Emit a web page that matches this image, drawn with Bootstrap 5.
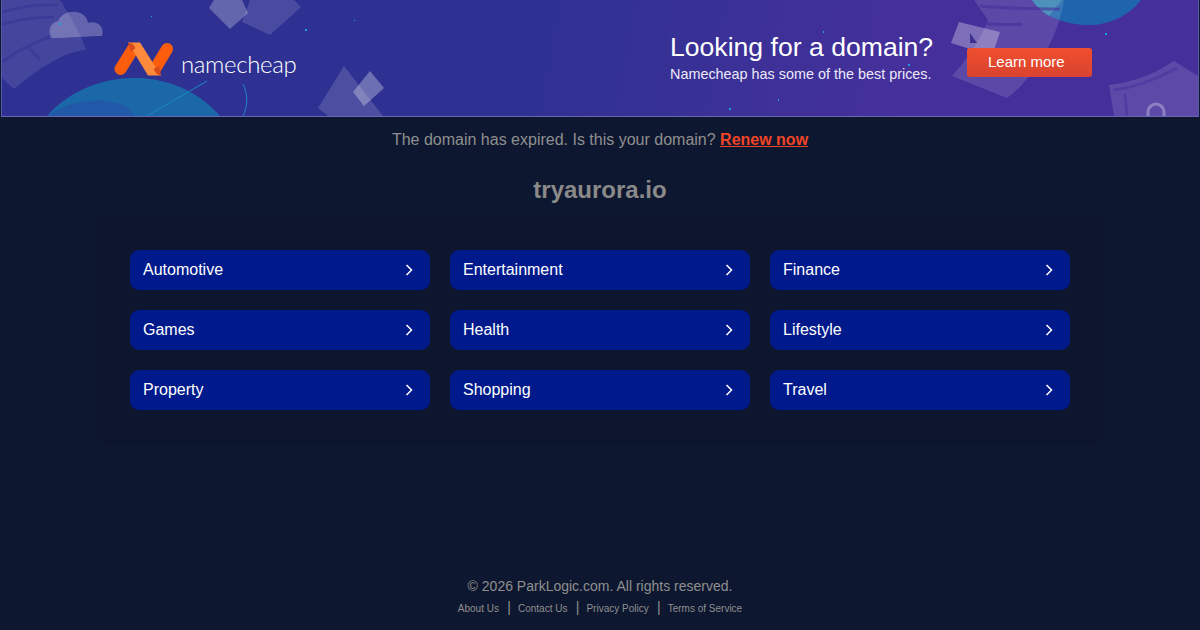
<!DOCTYPE html>
<html lang="en">
<head>
  <meta charset="UTF-8">
  <meta name="viewport" content="width=device-width, initial-scale=1.0">
  <title>tryaurora.io</title>
  <link rel="stylesheet" href="https://cdn.jsdelivr.net/npm/bootstrap@5.3.0/dist/css/bootstrap.min.css">
  <style>
    html, body { height: 100%; }
    body { background: #0e1730; font-family: "Liberation Sans", Arial, sans-serif; color: #8f8f8f; overflow: hidden; }
    .page-wrap { height: 630px; }
    .promo {
      position: relative; height: 117px; margin: 0 1px; overflow: hidden;
      background: linear-gradient(100deg, #2f3192 0%, #2f3192 45%, #45309b 75%, #45309b 100%);
      border-bottom: 1px solid #6a64b4; border-left: 1px solid #5a5aa8; border-right: 1px solid #5a5aa8;
    }
    .promo-art { position: absolute; left: 0; top: 0; width: 100%; height: 100%; }
    .promo-inner { position: relative; height: 100%; padding-left: 112px; }
    .nc-logo { width: 60px; height: 34px; margin-top: 1px; }
    .nc-word { font-family: Lato, sans-serif; font-weight: 300; font-size: 24px; color: #fff; line-height: 1; margin-left: 7px; margin-top: 11px; letter-spacing: -0.35px; }
    .promo-copy { position: absolute; left: 668px; top: 31px; color: #fff; }
    .promo-title { font-size: 26.6px; line-height: 32px; }
    .promo-sub { font-size: 14.4px; line-height: 20px; margin-top: 1px; color: #eceaf6; }
    .promo-btn {
      position: absolute; left: 965px; top: 48px; width: 125px; height: 29px; padding: 0 0 0 21px;
      background: linear-gradient(180deg, #f04f2e, #d9432f); color: #fff; border-radius: 3px;
      font-size: 15px; line-height: 28px; text-decoration: none;
    }
    .expired-note { font-size: 16px; line-height: 20px; margin-top: 13px; color: #8f8f8f; }
    .expired-note a { color: #ee4526; font-weight: 700; }
    .domain-name { font-size: 24px; font-weight: 700; line-height: 30px; margin: 25px 0 0; color: #8a8a8a; }
    .cat-panel { width: 1000px; margin: 15px auto 0; padding: 30px; border-radius: 10px; box-shadow: 0 0 5px rgba(9, 15, 34, .5); background: #0e162f; }
    .cat-grid { display: grid; grid-template-columns: repeat(3, 300px); gap: 20px; }
    .cat-link {
      height: 40px; padding: 0 15px 0 13px; background: #001a8c; color: #fff; border-radius: 9px;
      font-size: 16px; text-decoration: none;
    }
    .cat-link svg { width: 12px; height: 14px; }
    .site-foot { position: absolute; left: 0; right: 0; top: 576px; }
    .foot-copy { font-size: 14px; line-height: 20px; color: #8f8f8f; }
    .foot-links { font-size: 10px; line-height: 16px; margin-top: 3px; color: #8f8f8f; }
    .foot-links a { color: #8f8f8f; text-decoration: none; }
    .foot-sep { font-size: 14px; padding: 0 7.2px 0 8.2px; }
  </style>
</head>
<body>
<div class="page-wrap">
  <div class="promo">
    <svg class="promo-art" viewBox="0 0 1196 116" preserveAspectRatio="none" aria-hidden="true">
      <!-- globes -->
      <path d="M45 116C70 88 105 77 135 78C172 79 200 95 218 116Z" fill="#1b68a8"/>
      <path d="M45 116C62 104 85 99 105 101C122 103 130 109 132 116Z" fill="#2258a8"/>
      <path d="M145 116L205 81" stroke="#1e86c4" stroke-width="1" fill="none"/>
      <path d="M241 84C246 94 246 106 241 116" stroke="#1e86c4" stroke-width="1" fill="none"/>
      <path d="M1030 0C1040 16 1065 26 1090 25C1112 24 1130 12 1139 0Z" fill="#1f65ad"/>
      <path d="M1030 0C1034 6 1040 12 1047 16L1060 0Z" fill="#3f8fb5" opacity=".7"/>
      <!-- left scroll + cloud -->
      <path d="M0 0H58C68 16 78 32 84 50C60 52 35 70 12 89L0 78Z" fill="#fff" opacity=".1"/>
      <path d="M0 12C20 6 40 4 56 5M0 24C20 19 38 17 52 17M0 62C16 50 34 42 50 36M26 47L38 60" stroke="#2f3192" stroke-width="3" opacity=".45" fill="none"/>
      <path d="M49 38C46 30 48 23 56 21C62 8 84 9 86 23C96 20 103 28 100 36C88 36 66 38 49 38Z" fill="#fff" opacity=".25"/>
      <!-- left-top cards -->
      <path d="M240 22L268 35L299 7L292 0H248Z" fill="#fff" opacity=".13"/>
      <path d="M207 8L212 0H240L246 13L228 29Z" fill="#fff" opacity=".25" stroke="#fff" stroke-opacity=".1"/>
      <!-- lower-left pages -->
      <path d="M316 108L342 66L381 116H326Z" fill="#fff" opacity=".14"/>
      <path d="M351 92L368 71L382 88L362 106Z" fill="#fff" opacity=".3"/>
      <!-- right doc -->
      <path d="M972 0H1062C1056 40 1030 80 1005 98L950 76C965 60 978 40 986 20Z" fill="#fff" opacity=".12"/>
      <path d="M978 6C1000 8 1030 9 1058 9M975 23C985 24 1000 25 1020 24" stroke="#45309b" stroke-width="3" opacity=".6" fill="none"/>
      <path d="M957 22L998 32L990 56L949 43Z" fill="#fff" opacity=".3"/>
      <path d="M968 33L975 43L968 43Z" fill="#3d2f92"/>
      <!-- bottom-right scroll + lock -->
      <path d="M1107 85C1135 82 1155 72 1172 61L1196 76V116H1112Z" fill="#fff" opacity=".13"/>
      <path d="M1112 90C1135 87 1155 79 1175 68M1125 116L1123 94" stroke="#45309b" stroke-width="3" opacity=".5" fill="none"/>
      <path d="M1146 116V112A8 8 0 0 1 1162 112V116" stroke="#fff" stroke-width="3" opacity=".3" fill="none"/>
      <!-- specks -->
      <g fill="#16a3e0">
        <rect x="57" y="23" width="2" height="2"/><rect x="303" y="29" width="2" height="2"/><rect x="352" y="20" width="1" height="1"/>
        <rect x="149" y="16" width="1" height="1"/><rect x="255" y="67" width="2" height="2"/><rect x="727" y="108" width="2" height="2"/>
        <rect x="776" y="99" width="1" height="2"/><rect x="906" y="64" width="2" height="2"/><rect x="821" y="31" width="1" height="2"/>
        <rect x="1103" y="33" width="2" height="2"/>
      </g>
    </svg>
    <div class="promo-inner d-flex align-items-center">
      <svg class="nc-logo" viewBox="0 0 60 34" aria-hidden="true">
        <path d="M6.500 27L19 7" stroke="#fb5d0c" stroke-width="12" stroke-linecap="round" fill="none"/>
        <path d="M41 27L53 7" stroke="#fb5d0c" stroke-width="12" stroke-linecap="round" fill="none"/>
        <path d="M14 0.500H26L47 33.500H34Z" fill="#ff8a3c"/>
        <path d="M14 0.500C18 1 20 3 21.500 6L17 10Z" fill="#d84a1c"/>
        <path d="M47 33.500C43 33 41 30 39.500 27L45 24Z" fill="#d84a1c"/>
      </svg>
      <span class="nc-word">namecheap</span>
    </div>
    <div class="promo-copy">
      <div class="promo-title">Looking for a domain?</div>
      <div class="promo-sub">Namecheap has some of the best prices.</div>
    </div>
    <a class="promo-btn" href="#">Learn more</a>
  </div>

  <div class="expired-note text-center">The domain has expired. Is this your domain? <a href="#">Renew now</a></div>
  <h1 class="domain-name text-center">tryaurora.io</h1>

  <div class="cat-panel">
    <div class="cat-grid">
      <a class="cat-link d-flex align-items-center justify-content-between" href="#">Automotive <svg viewBox="0 0 12 14"><path d="M3.500 2L8.500 7L3.500 12" fill="none" stroke="#fff" stroke-width="1.500"/></svg></a>
      <a class="cat-link d-flex align-items-center justify-content-between" href="#">Entertainment <svg viewBox="0 0 12 14"><path d="M3.500 2L8.500 7L3.500 12" fill="none" stroke="#fff" stroke-width="1.500"/></svg></a>
      <a class="cat-link d-flex align-items-center justify-content-between" href="#">Finance <svg viewBox="0 0 12 14"><path d="M3.500 2L8.500 7L3.500 12" fill="none" stroke="#fff" stroke-width="1.500"/></svg></a>
      <a class="cat-link d-flex align-items-center justify-content-between" href="#">Games <svg viewBox="0 0 12 14"><path d="M3.500 2L8.500 7L3.500 12" fill="none" stroke="#fff" stroke-width="1.500"/></svg></a>
      <a class="cat-link d-flex align-items-center justify-content-between" href="#">Health <svg viewBox="0 0 12 14"><path d="M3.500 2L8.500 7L3.500 12" fill="none" stroke="#fff" stroke-width="1.500"/></svg></a>
      <a class="cat-link d-flex align-items-center justify-content-between" href="#">Lifestyle <svg viewBox="0 0 12 14"><path d="M3.500 2L8.500 7L3.500 12" fill="none" stroke="#fff" stroke-width="1.500"/></svg></a>
      <a class="cat-link d-flex align-items-center justify-content-between" href="#">Property <svg viewBox="0 0 12 14"><path d="M3.500 2L8.500 7L3.500 12" fill="none" stroke="#fff" stroke-width="1.500"/></svg></a>
      <a class="cat-link d-flex align-items-center justify-content-between" href="#">Shopping <svg viewBox="0 0 12 14"><path d="M3.500 2L8.500 7L3.500 12" fill="none" stroke="#fff" stroke-width="1.500"/></svg></a>
      <a class="cat-link d-flex align-items-center justify-content-between" href="#">Travel <svg viewBox="0 0 12 14"><path d="M3.500 2L8.500 7L3.500 12" fill="none" stroke="#fff" stroke-width="1.500"/></svg></a>
    </div>
  </div>

  <div class="site-foot text-center">
    <div class="foot-copy">© 2026 ParkLogic.com. All rights reserved.</div>
    <div class="foot-links"><a href="#">About Us</a><span class="foot-sep">|</span><a href="#">Contact Us</a><span class="foot-sep">|</span><a href="#">Privacy Policy</a><span class="foot-sep">|</span><a href="#">Terms of Service</a></div>
  </div>
</div>
<script src="https://cdn.jsdelivr.net/npm/bootstrap@5.3.0/dist/js/bootstrap.bundle.min.js"></script>
</body>
</html>
